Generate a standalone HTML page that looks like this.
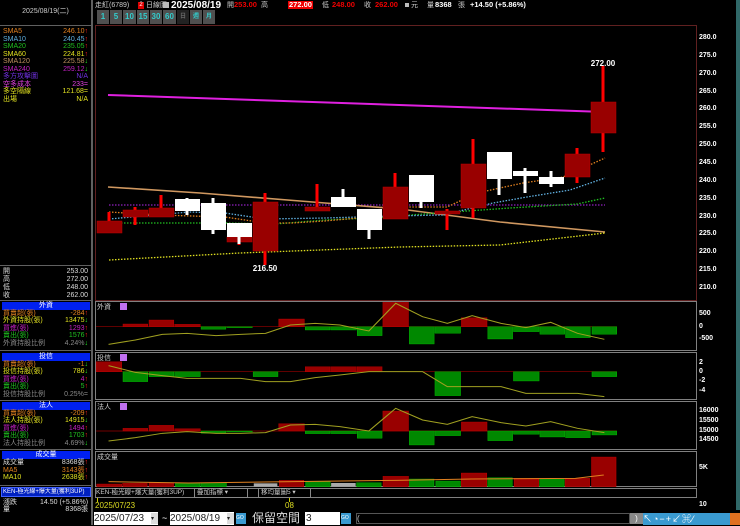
<!DOCTYPE html>
<html><head><meta charset="utf-8"><style>
*{margin:0;padding:0;box-sizing:border-box}
body{width:740px;height:525px;background:#000;position:relative;overflow:hidden;font-family:"Liberation Sans","Noto Sans CJK TC",sans-serif;font-size:7px;color:#ddd}
.a{position:absolute;white-space:nowrap;line-height:8px}
.r{text-align:right}
.hd{position:absolute;left:2px;width:88px;height:8px;background:#0020f0;color:#fff;text-align:center;line-height:8px;font-size:7px}
.btn{position:absolute;top:10px;height:14px;background:#505050;color:#3cc;font-size:8px;font-weight:bold;line-height:14px;text-align:center}
.ax{position:absolute;left:699px;color:#fff;font-size:7px;font-weight:bold;line-height:8px}
.p{font-weight:bold;font-size:7.5px}
</style></head><body>
<div style="position:absolute;left:91px;top:0;width:2px;height:525px;background:#606060"></div>
<div class="a" style="left:0;top:8px;width:91px;text-align:center;color:#ccc">2025/08/19(二)</div>
<div style="position:absolute;left:0;top:25px;width:91px;height:1px;background:#606060"></div>
<div class="a" style="left:3px;top:28px;color:#e08020">SMA5</div><div class="a r" style="left:40px;top:28px;width:48px;color:#e08020">246.10<span style="color:#f22">↑</span></div>
<div class="a" style="left:3px;top:36px;color:#60b0e0">SMA10</div><div class="a r" style="left:40px;top:36px;width:48px;color:#60b0e0">240.45<span style="color:#f22">↑</span></div>
<div class="a" style="left:3px;top:43px;color:#20c020">SMA20</div><div class="a r" style="left:40px;top:43px;width:48px;color:#20c020">235.05<span style="color:#f22">↑</span></div>
<div class="a" style="left:3px;top:51px;color:#e0e020">SMA60</div><div class="a r" style="left:40px;top:51px;width:48px;color:#e0e020">224.81<span style="color:#f22">↑</span></div>
<div class="a" style="left:3px;top:58px;color:#c09060">SMA120</div><div class="a r" style="left:40px;top:58px;width:48px;color:#c09060">225.58<span style="color:#2e2">↓</span></div>
<div class="a" style="left:3px;top:66px;color:#c020c0">SMA240</div><div class="a r" style="left:40px;top:66px;width:48px;color:#c020c0">259.12<span style="color:#2e2">↓</span></div>
<div class="a" style="left:3px;top:73px;color:#7030e0">多方攻擊圖</div><div class="a r" style="left:40px;top:73px;width:48px;color:#7030e0">N/A</div>
<div class="a" style="left:3px;top:81px;color:#e040e0">空多成本</div><div class="a r" style="left:40px;top:81px;width:48px;color:#e040e0">233=</div>
<div class="a" style="left:3px;top:88px;color:#e0e020">多空隔線</div><div class="a r" style="left:40px;top:88px;width:48px;color:#e0e020">121.68=</div>
<div class="a" style="left:3px;top:96px;color:#e0e020">出場</div><div class="a r" style="left:40px;top:96px;width:48px;color:#e0e020">N/A</div>
<div style="position:absolute;left:0;top:265px;width:91px;height:1px;background:#606060"></div>
<div class="a" style="left:3px;top:268px">開</div><div class="a r" style="left:40px;top:268px;width:48px">253.00</div>
<div class="a" style="left:3px;top:276px">高</div><div class="a r" style="left:40px;top:276px;width:48px">272.00</div>
<div class="a" style="left:3px;top:284px">低</div><div class="a r" style="left:40px;top:284px;width:48px">248.00</div>
<div class="a" style="left:3px;top:292px">收</div><div class="a r" style="left:40px;top:292px;width:48px">262.00</div>
<div style="position:absolute;left:0;top:300px;width:91px;height:1px;background:#606060"></div>

<div class="hd" style="top:302px">外資</div>
<div class="a" style="left:3px;top:310px;color:#e08020">買賣超(張)</div><div class="a r" style="left:40px;top:310px;width:48px;color:#e08020">-284<span style="color:#f22">↑</span></div>
<div class="a" style="left:3px;top:317px;color:#e0e020">外資持股(張)</div><div class="a r" style="left:40px;top:317px;width:48px;color:#e0e020">13475<span style="color:#2e2">↓</span></div>
<div class="a" style="left:3px;top:325px;color:#c020c0">買進(張)</div><div class="a r" style="left:40px;top:325px;width:48px;color:#c020c0">1293<span style="color:#f22">↑</span></div>
<div class="a" style="left:3px;top:332px;color:#20c020">賣出(張)</div><div class="a r" style="left:40px;top:332px;width:48px;color:#20c020">1576<span style="color:#f22">↑</span></div>
<div class="a" style="left:3px;top:340px;color:#888">外資持股比例</div><div class="a r" style="left:40px;top:340px;width:48px;color:#888">4.24%<span style="color:#2e2">↓</span></div>
<div style="position:absolute;left:0;top:350px;width:91px;height:1px;background:#606060"></div>
<div class="hd" style="top:353px">投信</div>
<div class="a" style="left:3px;top:361px;color:#e08020">買賣超(張)</div><div class="a r" style="left:40px;top:361px;width:48px;color:#e08020">-1<span style="color:#2e2">↓</span></div>
<div class="a" style="left:3px;top:368px;color:#e0e020">投信持股(張)</div><div class="a r" style="left:40px;top:368px;width:48px;color:#e0e020">786<span style="color:#2e2">↓</span></div>
<div class="a" style="left:3px;top:376px;color:#c020c0">買進(張)</div><div class="a r" style="left:40px;top:376px;width:48px;color:#c020c0">4<span style="color:#f22">↑</span></div>
<div class="a" style="left:3px;top:383px;color:#20c020">賣出(張)</div><div class="a r" style="left:40px;top:383px;width:48px;color:#20c020">5<span style="color:#f22">↑</span></div>
<div class="a" style="left:3px;top:391px;color:#888">投信持股比例</div><div class="a r" style="left:40px;top:391px;width:48px;color:#888">0.25%=</div>
<div style="position:absolute;left:0;top:400px;width:91px;height:1px;background:#606060"></div>
<div class="hd" style="top:402px">法人</div>
<div class="a" style="left:3px;top:410px;color:#e08020">買賣超(張)</div><div class="a r" style="left:40px;top:410px;width:48px;color:#e08020">-209<span style="color:#f22">↑</span></div>
<div class="a" style="left:3px;top:417px;color:#e0e020">法人持股(張)</div><div class="a r" style="left:40px;top:417px;width:48px;color:#e0e020">14915<span style="color:#2e2">↓</span></div>
<div class="a" style="left:3px;top:425px;color:#c020c0">買進(張)</div><div class="a r" style="left:40px;top:425px;width:48px;color:#c020c0">1494<span style="color:#f22">↑</span></div>
<div class="a" style="left:3px;top:432px;color:#20c020">賣出(張)</div><div class="a r" style="left:40px;top:432px;width:48px;color:#20c020">1703<span style="color:#f22">↑</span></div>
<div class="a" style="left:3px;top:440px;color:#888">法人持股比例</div><div class="a r" style="left:40px;top:440px;width:48px;color:#888">4.69%<span style="color:#2e2">↓</span></div>
<div style="position:absolute;left:0;top:449px;width:91px;height:1px;background:#606060"></div>
<div class="hd" style="top:451px">成交量</div>
<div class="a" style="left:3px;top:459px">成交量</div><div class="a r" style="left:40px;top:459px;width:48px">8368張<span style="color:#f22">↑</span></div>
<div class="a" style="left:3px;top:467px;color:#e08020">MA5</div><div class="a r" style="left:40px;top:467px;width:48px;color:#e08020">3143張<span style="color:#f22">↑</span></div>
<div class="a" style="left:3px;top:474px;color:#e0e020">MA10</div><div class="a r" style="left:40px;top:474px;width:48px;color:#e0e020">2638張<span style="color:#f22">↑</span></div>
<div style="position:absolute;left:0;top:485px;width:91px;height:1px;background:#606060"></div>
<div class="a" style="left:1px;top:487px;width:90px;height:10px;background:#0020c0;border:1px solid #4060ff;color:#fff;line-height:8px;font-size:6px;padding-left:1px;overflow:hidden">KEN-極光線+爆大量(獲利3UP)</div>
<div class="a" style="left:3px;top:499px">漲跌</div><div class="a r" style="left:40px;top:499px;width:48px">14.50 (+5.86%)</div>
<div class="a" style="left:3px;top:506px">量</div><div class="a r" style="left:40px;top:506px;width:48px">8368張</div>

<div class="a" style="left:95px;top:2px;color:#ccc">走紅(6789)</div>
<div class="a" style="left:138px;top:2px;width:6px;height:7px;background:#d00;color:#fff;font-size:6px;line-height:7px;text-align:center">2</div>
<div class="a" style="left:146px;top:2px;color:#ccc">日線圖</div>
<div class="a" style="left:163px;top:2px;width:6px;height:6px;background:#bbb"></div>
<div class="a" style="left:171px;top:0px;color:#fff;font-weight:bold;font-size:10px;line-height:11px">2025/08/19</div>
<div class="a" style="left:227px;top:2px;color:#ccc">開</div>
<div class="a p" style="left:234px;top:1px;color:#e00">253.00</div>
<div class="a" style="left:261px;top:2px;color:#ccc">高</div>
<div class="a p" style="left:288px;top:1px;color:#fff;background:#e00;padding:0 1px">272.00</div>
<div class="a" style="left:322px;top:2px;color:#ccc">低</div>
<div class="a p" style="left:332px;top:1px;color:#e00">248.00</div>
<div class="a" style="left:364px;top:2px;color:#ccc">收</div>
<div class="a p" style="left:375px;top:1px;color:#e00">262.00</div>
<div class="a" style="left:405px;top:3px;width:4px;height:4px;background:#bbb"></div>
<div class="a" style="left:411px;top:2px;color:#ccc">元</div>
<div class="a" style="left:427px;top:2px;color:#ccc">量</div>
<div class="a p" style="left:435px;top:1px;color:#fff">8368</div>
<div class="a" style="left:458px;top:2px;color:#ccc">張</div>
<div class="a p" style="left:470px;top:1px;color:#fff">+14.50 (+5.86%)</div>
<div class="btn" style="left:97px;width:12px">1</div>
<div class="btn" style="left:110px;width:12px">5</div>
<div class="btn" style="left:123px;width:13px">10</div>
<div class="btn" style="left:137px;width:12px">15</div>
<div class="btn" style="left:150px;width:12px">30</div>
<div class="btn" style="left:163px;width:13px">60</div>
<div class="btn" style="left:177px;width:12px;background:#222;color:#666;font-size:6px">日</div>
<div class="btn" style="left:190px;width:12px;font-size:6px">週</div>
<div class="btn" style="left:203px;width:12px;font-size:6px">月</div>
<div style="position:absolute;left:736px;top:0;width:4px;height:510px;background:#306868"></div>

<div class="ax" style="top:34px">280.0</div><div class="ax" style="top:52px">275.0</div><div class="ax" style="top:70px">270.0</div><div class="ax" style="top:88px">265.0</div><div class="ax" style="top:105px">260.0</div><div class="ax" style="top:123px">255.0</div><div class="ax" style="top:141px">250.0</div><div class="ax" style="top:159px">245.0</div><div class="ax" style="top:177px">240.0</div><div class="ax" style="top:195px">235.0</div><div class="ax" style="top:213px">230.0</div><div class="ax" style="top:230px">225.0</div><div class="ax" style="top:248px">220.0</div><div class="ax" style="top:266px">215.0</div><div class="ax" style="top:284px">210.0</div>
<div class="ax" style="top:310px">500</div><div class="ax" style="top:323px">0</div><div class="ax" style="top:335px">-500</div>
<div class="ax" style="top:359px">2</div><div class="ax" style="top:368px">0</div><div class="ax" style="top:377px">-2</div><div class="ax" style="top:387px">-4</div>
<div class="ax" style="top:407px">16000</div><div class="ax" style="top:417px">15500</div><div class="ax" style="top:427px">15000</div><div class="ax" style="top:436px">14500</div>
<div class="ax" style="top:464px">5K</div><div class="ax" style="top:501px">10</div>

<svg style="position:absolute;left:0;top:0" width="740" height="525">
<rect x="95.5" y="25.5" width="601" height="275" fill="none" stroke="#602020"/>
<polyline points="108,95 605,112" stroke="#e020e0" stroke-width="2" fill="none"/>
<polyline points="109,205 605,205" stroke="#9020c0" stroke-width="1.2" stroke-dasharray="1.5 1.5" fill="none"/>
<polyline points="108,187 200,193 300,201 400,209 500,222 605,232" stroke="#d09860" stroke-width="1.6" fill="none"/>
<polyline points="109,260 240,253 400,247 500,245 605,233" stroke="#e0e020" stroke-width="1.3" stroke-dasharray="1.5 1.5" fill="none"/>
<polyline points="109,223 225,223 275,224 325,220 392,217 410,215 510,208 577,204 605,198" stroke="#20c020" stroke-width="1.3" stroke-dasharray="1.5 1.5" fill="none"/>
<polyline points="109,219 189,212 225,213 265,219 325,218 392,216 443,215 493,203 527,197 570,190 605,178" stroke="#60b0e0" stroke-width="1.3" stroke-dasharray="1.5 1.5" fill="none"/>
<polyline points="109,212 159,215 225,217 265,223 292,223 325,221 369,217 395,207 447,207 477,193 523,183 563,177 605,158" stroke="#e08020" stroke-width="1.3" stroke-dasharray="1.5 1.5" fill="none"/>
<g stroke="#f00" stroke-width="3">
<line x1="109" y1="212" x2="109" y2="221"/><line x1="135" y1="207" x2="135" y2="225"/><line x1="161" y1="195" x2="161" y2="208"/>
<line x1="239" y1="228" x2="239" y2="245"/><line x1="265" y1="193" x2="265" y2="265"/><line x1="317" y1="184" x2="317" y2="211"/>
<line x1="395" y1="173" x2="395" y2="219"/><line x1="447" y1="209" x2="447" y2="230"/><line x1="473" y1="139" x2="473" y2="218"/>
<line x1="577" y1="148" x2="577" y2="183"/><line x1="603" y1="66" x2="603" y2="152"/>
</g>
<g fill="#900" stroke="#b00" stroke-width=".5">
<rect x="97" y="221" width="25" height="12"/><rect x="123" y="210" width="25" height="7"/><rect x="149" y="208" width="25" height="9"/>
<rect x="227" y="237" width="25" height="5"/><rect x="253" y="202" width="25" height="49"/><rect x="305" y="207" width="25" height="4"/>
<rect x="383" y="187" width="25" height="32"/><rect x="435" y="211" width="25" height="3"/><rect x="461" y="164" width="25" height="44"/>
<rect x="565" y="154" width="25" height="23"/><rect x="591" y="102" width="25" height="31"/>
</g>
<g stroke="#fff" stroke-width="3">
<line x1="187" y1="198" x2="187" y2="215"/><line x1="213" y1="198" x2="213" y2="234"/><line x1="239" y1="237" x2="239" y2="244"/>
<line x1="343" y1="189" x2="343" y2="207"/><line x1="369" y1="209" x2="369" y2="239"/><line x1="421" y1="202" x2="421" y2="208"/>
<line x1="499" y1="179" x2="499" y2="195"/><line x1="525" y1="168" x2="525" y2="193"/><line x1="551" y1="171" x2="551" y2="187"/>
</g>
<g fill="#fff">
<rect x="175" y="199" width="25" height="12"/><rect x="201" y="203" width="25" height="27"/><rect x="227" y="223" width="25" height="14"/>
<rect x="331" y="197" width="25" height="10"/><rect x="357" y="209" width="25" height="21"/><rect x="409" y="175" width="25" height="27"/>
<rect x="487" y="152" width="25" height="27"/><rect x="513" y="171" width="25" height="5"/><rect x="539" y="177" width="25" height="7"/>
</g>
<text x="265" y="271" fill="#fff" font-size="8" font-weight="bold" text-anchor="middle" font-family="Liberation Sans">216.50</text>
<text x="603" y="66" fill="#fff" font-size="8" font-weight="bold" text-anchor="middle" font-family="Liberation Sans">272.00</text>

<g fill="none" stroke="#808080">
<rect x="95.5" y="301.5" width="601" height="49"/><rect x="95.5" y="352.5" width="601" height="47"/>
<rect x="95.5" y="401.5" width="601" height="48"/><rect x="95.5" y="451.5" width="601" height="35"/>
</g>
<g font-size="7" fill="#ccc" font-family="Liberation Sans,Noto Sans CJK TC,sans-serif">
<text x="97" y="309">外資</text><text x="97" y="360">投信</text><text x="97" y="409">法人</text><text x="97" y="459">成交量</text>
</g>
<g fill="#c070f0"><rect x="120" y="303" width="7" height="7"/><rect x="120" y="354" width="7" height="7"/><rect x="120" y="403" width="7" height="7"/></g>

<g transform="translate(92,295) scale(0.4132,0.3333)">
<line x1="10" y1="95" x2="1270" y2="95" stroke="#900" stroke-width="2"/>
<g fill="#900" stroke="#c00"><rect x="75" y="87" width="60" height="8"/><rect x="138" y="75" width="60" height="20"/><rect x="200" y="88" width="62" height="7"/><rect x="452" y="72" width="62" height="23"/><rect x="704" y="22" width="62" height="73"/><rect x="894" y="68" width="62" height="27"/></g>
<g fill="#080" stroke="#0c0"><rect x="264" y="95" width="60" height="8"/><rect x="326" y="95" width="62" height="3"/><rect x="516" y="95" width="60" height="10"/><rect x="578" y="95" width="62" height="10"/><rect x="642" y="95" width="60" height="27"/><rect x="768" y="95" width="60" height="52"/><rect x="830" y="95" width="62" height="20"/><rect x="958" y="95" width="60" height="37"/><rect x="1020" y="95" width="62" height="15"/><rect x="1084" y="95" width="60" height="23"/><rect x="1146" y="95" width="60" height="33"/><rect x="1210" y="95" width="60" height="23"/></g>
<polyline points="40,148 105,135 170,118 230,115 300,122 360,118 420,115 480,90 540,85 600,90 670,108 735,25 800,65 860,85 920,62 990,85 1050,98 1110,82 1175,115 1240,133" stroke="#a0a020" stroke-width="3" fill="none"/>
<line x1="10" y1="230" x2="1270" y2="230" stroke="#900" stroke-width="2"/>
<g fill="#900" stroke="#c00"><rect x="10" y="200" width="62" height="30"/><rect x="516" y="215" width="60" height="15"/><rect x="578" y="215" width="62" height="15"/><rect x="642" y="215" width="60" height="15"/></g>
<g fill="#080" stroke="#0c0"><rect x="75" y="230" width="60" height="30"/><rect x="138" y="230" width="60" height="15"/><rect x="200" y="230" width="62" height="15"/><rect x="390" y="230" width="60" height="15"/><rect x="830" y="230" width="62" height="72"/><rect x="1020" y="230" width="62" height="28"/><rect x="1210" y="230" width="60" height="15"/></g>
<polyline points="40,212 105,232 170,242 230,250 300,250 360,250 420,260 480,260 540,248 600,240 670,230 735,230 800,230 860,275 920,275 990,275 1050,295 1110,295 1175,295 1240,305" stroke="#a0a020" stroke-width="3" fill="none"/>
<line x1="10" y1="408" x2="1270" y2="408" stroke="#900" stroke-width="2"/>
<g fill="#900" stroke="#c00"><rect x="75" y="400" width="60" height="8"/><rect x="138" y="391" width="60" height="17"/><rect x="200" y="401" width="62" height="7"/><rect x="452" y="386" width="62" height="22"/><rect x="704" y="348" width="62" height="60"/><rect x="894" y="381" width="62" height="27"/></g>
<g fill="#080" stroke="#0c0"><rect x="264" y="408" width="60" height="7"/><rect x="326" y="408" width="62" height="3"/><rect x="516" y="408" width="60" height="8"/><rect x="578" y="408" width="62" height="8"/><rect x="642" y="408" width="60" height="22"/><rect x="768" y="408" width="60" height="42"/><rect x="830" y="408" width="62" height="14"/><rect x="958" y="408" width="60" height="29"/><rect x="1020" y="408" width="62" height="10"/><rect x="1084" y="408" width="60" height="18"/><rect x="1146" y="408" width="60" height="20"/><rect x="1210" y="408" width="60" height="12"/></g>
<polyline points="40,438 105,428 170,415 230,410 300,415 360,415 420,413 480,390 540,388 600,395 670,408 735,340 800,375 860,388 920,365 990,383 1050,393 1110,380 1175,400 1240,413" stroke="#a0a020" stroke-width="3" fill="none"/>
</g>
<g transform="translate(0,455) scale(0.4717,0.3333)">
<g fill="#900" stroke="#c00"><rect x="205" y="87" width="53" height="8"/><rect x="260" y="85" width="52" height="10"/><rect x="316" y="83" width="52" height="12"/><rect x="592" y="76" width="52" height="19"/><rect x="812" y="64" width="54" height="31"/><rect x="978" y="54" width="54" height="41"/><rect x="1090" y="70" width="52" height="25"/><rect x="1198" y="70" width="52" height="25"/><rect x="1254" y="6" width="52" height="89"/></g>
<g fill="#080" stroke="#0c0"><rect x="372" y="83" width="52" height="12"/><rect x="426" y="83" width="54" height="12"/><rect x="648" y="80" width="52" height="15"/><rect x="756" y="83" width="52" height="12"/><rect x="868" y="72" width="52" height="23"/><rect x="924" y="78" width="52" height="17"/><rect x="1034" y="68" width="52" height="27"/><rect x="1144" y="73" width="52" height="22"/></g>
<g fill="#aaa"><rect x="538" y="85" width="50" height="10"/><rect x="702" y="84" width="52" height="11"/></g>
<polyline points="230,80 400,84 620,80 840,76 1000,72 1220,70 1280,60" stroke="#e08020" stroke-width="3" fill="none"/>
</g>
</svg>

<div style="position:absolute;left:95px;top:488px;width:602px;height:10px;border:1px solid #808080"></div>
<div class="a" style="left:96px;top:489px;color:#ccc;font-size:6.5px">KEN-極光線+爆大量(獲利3UP)</div>
<div class="a" style="left:194px;top:488px;width:54px;height:10px;border:1px solid #888;color:#ccc;padding-left:2px;font-size:6.5px">疊加指標 ▾</div>
<div class="a" style="left:258px;top:488px;width:53px;height:10px;border:1px solid #888;color:#ccc;padding-left:2px;font-size:6.5px">移均量圖5 ▾</div>
<div style="position:absolute;left:97px;top:498px;width:1px;height:4px;background:#cc0"></div>
<div style="position:absolute;left:289px;top:498px;width:1px;height:4px;background:#cc0"></div>
<div class="a" style="left:95px;top:502px;color:#dd2;font-size:8px">2025/07/23</div>
<div class="a" style="left:285px;top:502px;color:#dd2;font-size:8px">08</div>
<div class="a" style="left:94px;top:512px;width:64px;height:13px;background:#fff;color:#222;font-size:10px;line-height:13px">2025/07/23<span style="position:absolute;right:0;top:1px;width:7px;height:11px;background:#ddd;font-size:6px">▾</span></div>
<div class="a" style="left:162px;top:512px;color:#fff;font-size:9px;line-height:13px">~</div>
<div class="a" style="left:170px;top:512px;width:64px;height:13px;background:#fff;color:#222;font-size:10px;line-height:13px">2025/08/19<span style="position:absolute;right:0;top:1px;width:7px;height:11px;background:#ddd;font-size:6px">▾</span></div>
<div class="a" style="left:236px;top:513px;width:10px;height:11px;background:#3a9ad0;color:#fff;font-size:5px;line-height:11px">GO</div>
<div class="a" style="left:252px;top:511px;color:#ddd;font-size:12px;line-height:14px">保留空間</div>
<div class="a" style="left:305px;top:512px;width:35px;height:13px;background:#fff;color:#222;font-size:10px;line-height:13px;padding-left:1px">3</div>
<div class="a" style="left:341px;top:513px;width:10px;height:11px;background:#3a9ad0;color:#fff;font-size:5px;line-height:11px">GO</div>
<div class="a" style="left:356px;top:513px;width:274px;height:11px;background:#000;border:1px solid #555;color:#ccc;font-size:8px;line-height:9px">(</div>
<div class="a" style="left:630px;top:513px;width:13px;height:11px;background:#888;color:#fff;font-size:8px;line-height:11px;text-align:center">)</div>
<div class="a" style="left:643px;top:513px;width:87px;height:12px;background:#3a9ad0;color:#fff;font-size:9px;line-height:12px;letter-spacing:1px">↖◔−+↙⌘⁄</div>
<div class="a" style="left:730px;top:513px;width:10px;height:12px;background:#e07020"></div>
</body></html>
